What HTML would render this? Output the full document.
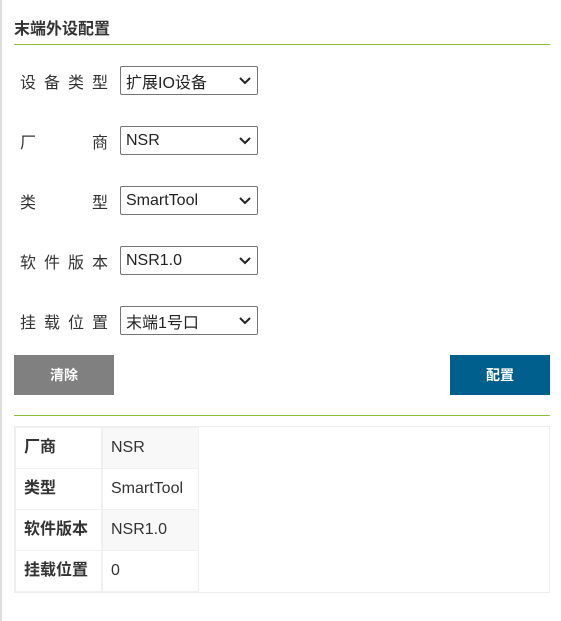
<!DOCTYPE html>
<html><head><meta charset="utf-8"><style>
*{margin:0;padding:0;box-sizing:border-box}
body{width:561px;height:621px;background:#fff;font-family:"Liberation Sans","Noto Sans CJK SC",sans-serif;position:relative;overflow:hidden}
.abs{position:absolute}
.title{left:14px;top:15px;font-size:16px;font-weight:bold;color:#333}
.hr{left:14px;width:536px;height:1px;background:#8fbf3a}
.lab{left:20px;width:88px;font-size:16px;color:#333;display:flex;justify-content:space-between;height:29px;align-items:center}
.sel{left:120px;width:138px;height:29px;border:1px solid #767676;border-radius:2px;font-size:16px;color:#222;padding-left:5px;display:flex;align-items:center}
.sel svg{position:absolute;right:6px;top:10px}
.btn{top:355px;width:100px;height:40px;color:#fff;font-weight:bold;font-size:14px;display:flex;align-items:center;justify-content:center}
.c{position:absolute;font-size:16px;color:#333;height:40px;line-height:40px;white-space:nowrap}
.k{left:16px;width:85px;font-weight:bold;background:#fff;padding-left:8px}
.v{left:103px;width:95px;background:#fff;padding-left:8px}
</style></head><body>
<div class="abs" style="left:0;top:0;width:2px;height:621px;background:#ddd"></div>
<div class="abs title">末端外设配置</div>
<div class="abs hr" style="top:44px"></div>

<div class="abs lab" style="top:66px"><span>设</span><span>备</span><span>类</span><span>型</span></div>
<div class="abs sel" style="top:66px">扩展IO设备<svg width="12" height="8"><path d="M1 1l5 5 5-5" stroke="#222" stroke-width="2" fill="none"/></svg></div>
<div class="abs lab" style="top:126px"><span>厂</span><span>商</span></div>
<div class="abs sel" style="top:126px">NSR<svg width="12" height="8"><path d="M1 1l5 5 5-5" stroke="#222" stroke-width="2" fill="none"/></svg></div>
<div class="abs lab" style="top:186px"><span>类</span><span>型</span></div>
<div class="abs sel" style="top:186px">SmartTool<svg width="12" height="8"><path d="M1 1l5 5 5-5" stroke="#222" stroke-width="2" fill="none"/></svg></div>
<div class="abs lab" style="top:246px"><span>软</span><span>件</span><span>版</span><span>本</span></div>
<div class="abs sel" style="top:246px">NSR1.0<svg width="12" height="8"><path d="M1 1l5 5 5-5" stroke="#222" stroke-width="2" fill="none"/></svg></div>
<div class="abs lab" style="top:306px"><span>挂</span><span>载</span><span>位</span><span>置</span></div>
<div class="abs sel" style="top:306px">末端1号口<svg width="12" height="8"><path d="M1 1l5 5 5-5" stroke="#222" stroke-width="2" fill="none"/></svg></div>

<div class="abs btn" style="left:14px;background:#808080">清除</div>
<div class="abs btn" style="left:450px;background:#005f8c">配置</div>
<div class="abs hr" style="top:415px"></div>

<div class="abs" style="left:14px;top:426px;width:536px;height:167px;border:1px solid #eee;background:#fff"></div>
<div class="abs" style="left:15px;top:427px;width:184px;height:165px;background:#f0f0f0"></div>
<div class="c k" style="top:428px">厂商</div><div class="c v" style="top:428px;background:#f8f8f8">NSR</div>
<div class="c k" style="top:469px">类型</div><div class="c v" style="top:469px">SmartTool</div>
<div class="c k" style="top:510px">软件版本</div><div class="c v" style="top:510px;background:#f8f8f8">NSR1.0</div>
<div class="c k" style="top:551px">挂载位置</div><div class="c v" style="top:551px">0</div>
</body></html>
